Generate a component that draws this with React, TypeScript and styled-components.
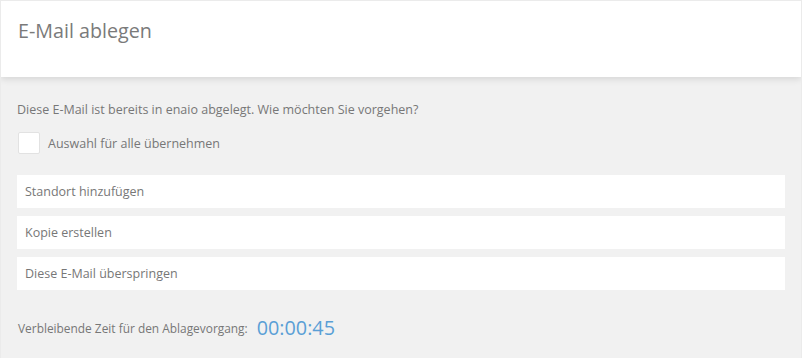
import React from "react";
import styled, { createGlobalStyle } from "styled-components";

const Global = createGlobalStyle`
  html, body { margin: 0; padding: 0; background: #ffffff; }
  body { font-family: "Open Sans", "Liberation Sans", sans-serif; }
  * { box-sizing: border-box; }
`;

const Frame = styled.div`
  width: 802px;
  height: 358px;
  border: 1px solid #ebebeb;
  border-bottom: none;
  background: #f1f1f1;
  display: flex;
  flex-direction: column;
  overflow: hidden;
`;

const Header = styled.header`
  height: 76px;
  background: #ffffff;
  display: flex;
  align-items: flex-start;
  padding: 17px 0 0 17px;
  box-shadow: 0 2px 7px rgba(0, 0, 0, 0.12);
  position: relative;
  z-index: 1;
`;

const Title = styled.h1`
  margin: 0;
  font-size: 19.7px;
  font-weight: 400;
  color: #7a7a7a;
  line-height: 26px;
`;

const Body = styled.main`
  padding: 22px 16px 0 16px;
  display: flex;
  flex-direction: column;
`;

const Intro = styled.p`
  margin: 0;
  font-size: 12.5px;
  line-height: 22px;
  color: #777777;
`;

const CheckRow = styled.label`
  display: flex;
  align-items: center;
  gap: 8px;
  margin-top: 11px;
  padding-left: 1px;
  font-size: 12.5px;
  color: #777777;
`;

const Box = styled.span`
  width: 22px;
  height: 22px;
  background: #ffffff;
  border: 1px solid #e2e2e2;
  border-radius: 2px;
`;

const Options = styled.div`
  display: flex;
  flex-direction: column;
  gap: 8px;
  margin-top: 21px;
`;

const Option = styled.div`
  height: 33px;
  width: 768px;
  background: #ffffff;
  display: flex;
  align-items: center;
  padding-left: 8px;
  font-size: 12.5px;
  color: #777777;
`;

const TimerRow = styled.div`
  display: flex;
  align-items: center;
  gap: 9px;
  margin-top: 24px;
  padding-left: 1px;
`;

const TimerLabel = styled.span`
  font-size: 11.9px;
  color: #777777;
`;

const TimerValue = styled.span`
  font-size: 19.8px;
  color: #5a9fd6;
`;

export default function App() {
  return (
    <>
      <Global />
      <Frame>
        <Header>
          <Title>E-Mail ablegen</Title>
        </Header>
        <Body>
          <Intro>Diese E-Mail ist bereits in enaio abgelegt. Wie möchten Sie vorgehen?</Intro>
          <CheckRow>
            <Box />
            Auswahl für alle übernehmen
          </CheckRow>
          <Options>
            <Option>Standort hinzufügen</Option>
            <Option>Kopie erstellen</Option>
            <Option>Diese E-Mail überspringen</Option>
          </Options>
          <TimerRow>
            <TimerLabel>Verbleibende Zeit für den Ablagevorgang:</TimerLabel>
            <TimerValue>00:00:45</TimerValue>
          </TimerRow>
        </Body>
      </Frame>
    </>
  );
}
